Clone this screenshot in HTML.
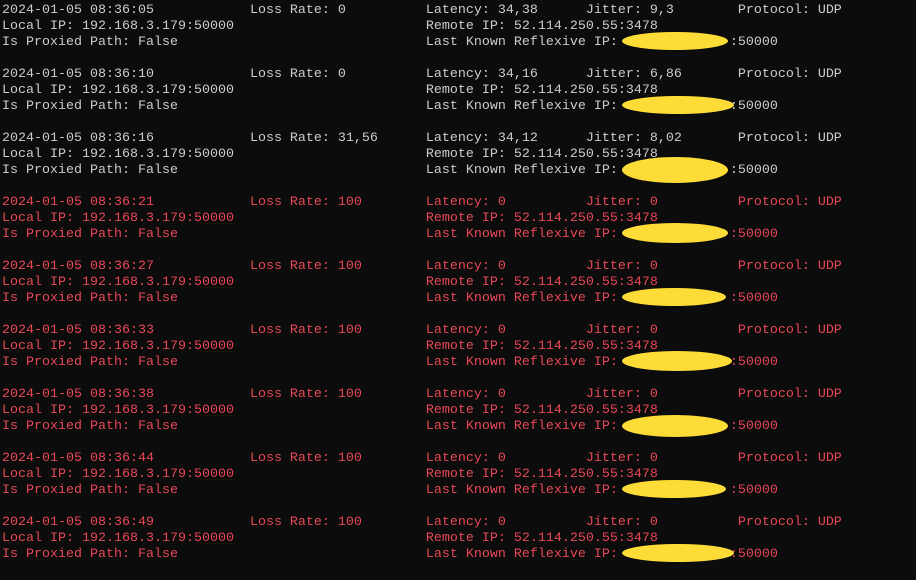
<!DOCTYPE html>
<html><head><style>
html,body{margin:0;padding:0;background:#0c0c0c;width:916px;height:580px;overflow:hidden}
pre{margin:0;position:absolute;left:2px;font-family:"Liberation Mono",monospace;font-size:13.33px;line-height:16px;color:#cccccc;white-space:pre}
.r{color:#e74856}
.y{position:absolute;background:#fedc38;border-radius:50%/50%;height:18px;width:106px;left:622px}
</style></head><body>
<pre style="top:3px">2024-01-05 08:36:05            Loss Rate: 0          Latency: 34,38      Jitter: 9,3        Protocol: UDP
Local IP: 192.168.3.179:50000                        Remote IP: 52.114.250.55:3478
Is Proxied Path: False                               Last Known Reflexive IP:              :50000

2024-01-05 08:36:10            Loss Rate: 0          Latency: 34,16      Jitter: 6,86       Protocol: UDP
Local IP: 192.168.3.179:50000                        Remote IP: 52.114.250.55:3478
Is Proxied Path: False                               Last Known Reflexive IP:              :50000

2024-01-05 08:36:16            Loss Rate: 31,56      Latency: 34,12      Jitter: 8,02       Protocol: UDP
Local IP: 192.168.3.179:50000                        Remote IP: 52.114.250.55:3478
Is Proxied Path: False                               Last Known Reflexive IP:              :50000
<span class="r">
2024-01-05 08:36:21            Loss Rate: 100        Latency: 0          Jitter: 0          Protocol: UDP
Local IP: 192.168.3.179:50000                        Remote IP: 52.114.250.55:3478
Is Proxied Path: False                               Last Known Reflexive IP:              :50000

2024-01-05 08:36:27            Loss Rate: 100        Latency: 0          Jitter: 0          Protocol: UDP
Local IP: 192.168.3.179:50000                        Remote IP: 52.114.250.55:3478
Is Proxied Path: False                               Last Known Reflexive IP:              :50000

2024-01-05 08:36:33            Loss Rate: 100        Latency: 0          Jitter: 0          Protocol: UDP
Local IP: 192.168.3.179:50000                        Remote IP: 52.114.250.55:3478
Is Proxied Path: False                               Last Known Reflexive IP:              :50000

2024-01-05 08:36:38            Loss Rate: 100        Latency: 0          Jitter: 0          Protocol: UDP
Local IP: 192.168.3.179:50000                        Remote IP: 52.114.250.55:3478
Is Proxied Path: False                               Last Known Reflexive IP:              :50000

2024-01-05 08:36:44            Loss Rate: 100        Latency: 0          Jitter: 0          Protocol: UDP
Local IP: 192.168.3.179:50000                        Remote IP: 52.114.250.55:3478
Is Proxied Path: False                               Last Known Reflexive IP:              :50000

2024-01-05 08:36:49            Loss Rate: 100        Latency: 0          Jitter: 0          Protocol: UDP
Local IP: 192.168.3.179:50000                        Remote IP: 52.114.250.55:3478
Is Proxied Path: False                               Last Known Reflexive IP:              :50000</span></pre>
<div class="y" style="top:32px"></div>
<div class="y" style="top:96px;width:112px"></div>
<div class="y" style="top:157px;height:26px"></div>
<div class="y" style="top:223px;height:20px"></div>
<div class="y" style="top:288px;width:104px"></div>
<div class="y" style="top:351px;height:20px;width:110px"></div>
<div class="y" style="top:415px;height:22px"></div>
<div class="y" style="top:480px;width:104px"></div>
<div class="y" style="top:544px;width:112px"></div>
</body></html>
